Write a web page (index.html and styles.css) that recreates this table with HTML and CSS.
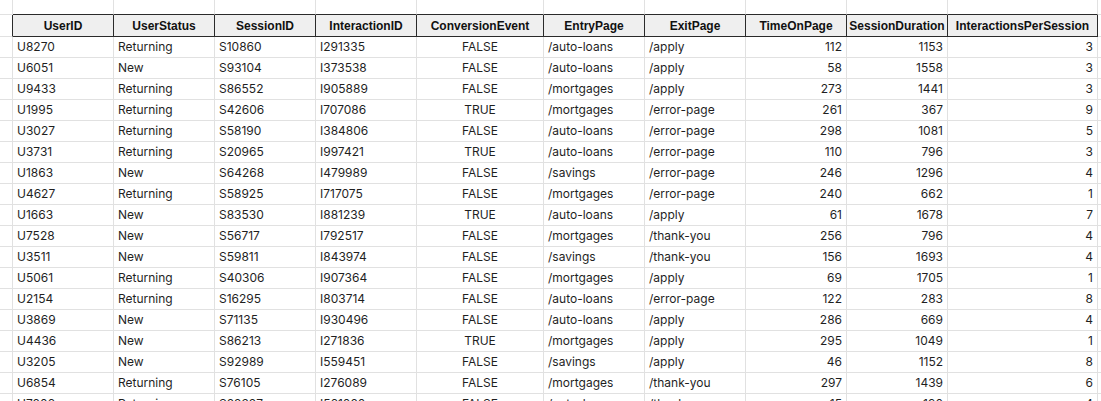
FILE: index.html
```html
<!DOCTYPE html>
<html>
<head>
<meta charset="utf-8">
<title>Sessions</title>
<link rel="stylesheet" href="styles.css">
</head>
<body>
<div class="sheet">
  <div class="cell lead"></div>
  <div class="cell lead cap"></div><div class="cell lead cap"></div><div class="cell lead cap"></div><div class="cell lead cap"></div><div class="cell lead cap"></div><div class="cell lead cap"></div><div class="cell lead cap"></div><div class="cell lead cap"></div><div class="cell lead cap"></div><div class="cell lead cap"></div>
  <div class="cell lead"></div>

  <div class="cell hrow hedge"></div>
  <div class="cell hrow head">UserID</div>
  <div class="cell hrow head">UserStatus</div>
  <div class="cell hrow head">SessionID</div>
  <div class="cell hrow head">InteractionID</div>
  <div class="cell hrow head">ConversionEvent</div>
  <div class="cell hrow head">EntryPage</div>
  <div class="cell hrow head">ExitPage</div>
  <div class="cell hrow head">TimeOnPage</div>
  <div class="cell hrow head">SessionDuration</div>
  <div class="cell hrow head">InteractionsPerSession</div>
  <div class="cell hrow"></div>

  <div class="cell"></div><div class="cell">U8270</div><div class="cell">Returning</div><div class="cell">S10860</div><div class="cell">I291335</div><div class="cell c">FALSE</div><div class="cell">/auto-loans</div><div class="cell">/apply</div><div class="cell r">112</div><div class="cell r">1153</div><div class="cell r">3</div><div class="cell"></div>
  <div class="cell"></div><div class="cell">U6051</div><div class="cell">New</div><div class="cell">S93104</div><div class="cell">I373538</div><div class="cell c">FALSE</div><div class="cell">/auto-loans</div><div class="cell">/apply</div><div class="cell r">58</div><div class="cell r">1558</div><div class="cell r">3</div><div class="cell"></div>
  <div class="cell"></div><div class="cell">U9433</div><div class="cell">Returning</div><div class="cell">S86552</div><div class="cell">I905889</div><div class="cell c">FALSE</div><div class="cell">/mortgages</div><div class="cell">/apply</div><div class="cell r">273</div><div class="cell r">1441</div><div class="cell r">3</div><div class="cell"></div>
  <div class="cell"></div><div class="cell">U1995</div><div class="cell">Returning</div><div class="cell">S42606</div><div class="cell">I707086</div><div class="cell c">TRUE</div><div class="cell">/mortgages</div><div class="cell">/error-page</div><div class="cell r">261</div><div class="cell r">367</div><div class="cell r">9</div><div class="cell"></div>
  <div class="cell"></div><div class="cell">U3027</div><div class="cell">Returning</div><div class="cell">S58190</div><div class="cell">I384806</div><div class="cell c">FALSE</div><div class="cell">/auto-loans</div><div class="cell">/error-page</div><div class="cell r">298</div><div class="cell r">1081</div><div class="cell r">5</div><div class="cell"></div>
  <div class="cell"></div><div class="cell">U3731</div><div class="cell">Returning</div><div class="cell">S20965</div><div class="cell">I997421</div><div class="cell c">TRUE</div><div class="cell">/auto-loans</div><div class="cell">/error-page</div><div class="cell r">110</div><div class="cell r">796</div><div class="cell r">3</div><div class="cell"></div>
  <div class="cell"></div><div class="cell">U1863</div><div class="cell">New</div><div class="cell">S64268</div><div class="cell">I479989</div><div class="cell c">FALSE</div><div class="cell">/savings</div><div class="cell">/error-page</div><div class="cell r">246</div><div class="cell r">1296</div><div class="cell r">4</div><div class="cell"></div>
  <div class="cell"></div><div class="cell">U4627</div><div class="cell">Returning</div><div class="cell">S58925</div><div class="cell">I717075</div><div class="cell c">FALSE</div><div class="cell">/mortgages</div><div class="cell">/error-page</div><div class="cell r">240</div><div class="cell r">662</div><div class="cell r">1</div><div class="cell"></div>
  <div class="cell"></div><div class="cell">U1663</div><div class="cell">New</div><div class="cell">S83530</div><div class="cell">I881239</div><div class="cell c">TRUE</div><div class="cell">/auto-loans</div><div class="cell">/apply</div><div class="cell r">61</div><div class="cell r">1678</div><div class="cell r">7</div><div class="cell"></div>
  <div class="cell"></div><div class="cell">U7528</div><div class="cell">New</div><div class="cell">S56717</div><div class="cell">I792517</div><div class="cell c">FALSE</div><div class="cell">/mortgages</div><div class="cell">/thank-you</div><div class="cell r">256</div><div class="cell r">796</div><div class="cell r">4</div><div class="cell"></div>
  <div class="cell"></div><div class="cell">U3511</div><div class="cell">New</div><div class="cell">S59811</div><div class="cell">I843974</div><div class="cell c">FALSE</div><div class="cell">/savings</div><div class="cell">/thank-you</div><div class="cell r">156</div><div class="cell r">1693</div><div class="cell r">4</div><div class="cell"></div>
  <div class="cell"></div><div class="cell">U5061</div><div class="cell">Returning</div><div class="cell">S40306</div><div class="cell">I907364</div><div class="cell c">FALSE</div><div class="cell">/mortgages</div><div class="cell">/apply</div><div class="cell r">69</div><div class="cell r">1705</div><div class="cell r">1</div><div class="cell"></div>
  <div class="cell"></div><div class="cell">U2154</div><div class="cell">Returning</div><div class="cell">S16295</div><div class="cell">I803714</div><div class="cell c">FALSE</div><div class="cell">/auto-loans</div><div class="cell">/error-page</div><div class="cell r">122</div><div class="cell r">283</div><div class="cell r">8</div><div class="cell"></div>
  <div class="cell"></div><div class="cell">U3869</div><div class="cell">New</div><div class="cell">S71135</div><div class="cell">I930496</div><div class="cell c">FALSE</div><div class="cell">/auto-loans</div><div class="cell">/apply</div><div class="cell r">286</div><div class="cell r">669</div><div class="cell r">4</div><div class="cell"></div>
  <div class="cell"></div><div class="cell">U4436</div><div class="cell">New</div><div class="cell">S86213</div><div class="cell">I271836</div><div class="cell c">TRUE</div><div class="cell">/mortgages</div><div class="cell">/apply</div><div class="cell r">295</div><div class="cell r">1049</div><div class="cell r">1</div><div class="cell"></div>
  <div class="cell"></div><div class="cell">U3205</div><div class="cell">New</div><div class="cell">S92989</div><div class="cell">I559451</div><div class="cell c">FALSE</div><div class="cell">/savings</div><div class="cell">/apply</div><div class="cell r">46</div><div class="cell r">1152</div><div class="cell r">8</div><div class="cell"></div>
  <div class="cell"></div><div class="cell">U6854</div><div class="cell">Returning</div><div class="cell">S76105</div><div class="cell">I276089</div><div class="cell c">FALSE</div><div class="cell">/mortgages</div><div class="cell">/thank-you</div><div class="cell r">297</div><div class="cell r">1439</div><div class="cell r">6</div><div class="cell"></div>
  <div class="cell"></div><div class="cell">U7806</div><div class="cell">Returning</div><div class="cell">S82327</div><div class="cell">I561080</div><div class="cell c">FALSE</div><div class="cell">/auto-loans</div><div class="cell">/thank-you</div><div class="cell r">15</div><div class="cell r">190</div><div class="cell r">4</div><div class="cell"></div>
</div>
</body>
</html>
```
FILE: styles.css
```css
html, body {
  margin: 0;
  padding: 0;
  background: #fff;
  overflow: hidden;
}

.sheet {
  display: grid;
  grid-template-columns: 13px 101px 101px 101px 101px 127px 101px 101px 101px 101px 150px minmax(0, 1fr);
  grid-auto-rows: 21px;
  grid-template-rows: 15px 22px;
  font-family: Inter, "Noto Sans", sans-serif;
  font-size: 12px;
  color: #1f1f1f;
}

.cell {
  box-sizing: border-box;
  border-right: 1px solid #e1e1e1;
  border-bottom: 1px solid #e1e1e1;
  padding: 0 4px;
  display: flex;
  align-items: center;
  white-space: nowrap;
  overflow: hidden;
  line-height: 1;
}

.cap {
  border-bottom-color: #2a2a2a;
}

.hedge {
  border-right-color: #2a2a2a;
}

.head {
  background: #efefef;
  border-right-color: #2a2a2a;
  border-bottom-color: #2a2a2a;
  justify-content: center;
  padding: 0 2px;
  font-family: "Liberation Sans", Arial, sans-serif;
  font-weight: bold;
  font-size: 12px;
  color: #111;
}

.c { justify-content: center; }
.r { justify-content: flex-end; }
```
